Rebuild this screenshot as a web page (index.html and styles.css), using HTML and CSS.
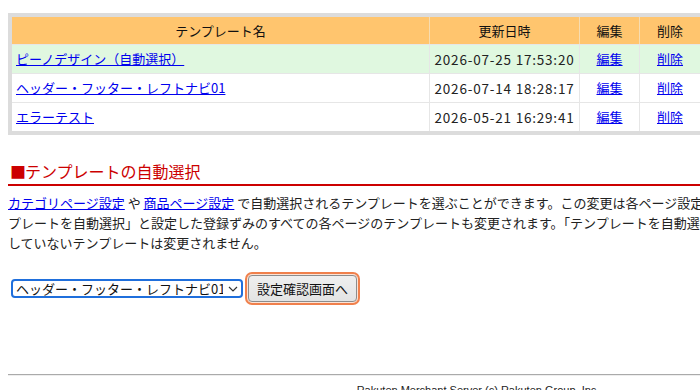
FILE: index.html
```html
<!DOCTYPE html>
<html lang="ja">
<head>
<meta charset="utf-8">
<title>テンプレート一覧</title>
<link rel="stylesheet" href="styles.css">
</head>
<body>
<div class="page">
  <div class="frame">
    <table class="tpl-table">
      <colgroup>
        <col class="c-name"><col class="c-date"><col class="c-edit"><col class="c-del">
      </colgroup>
      <thead>
        <tr><th>テンプレート名</th><th>更新日時</th><th>編集</th><th>削除</th></tr>
      </thead>
      <tbody>
        <tr class="selected">
          <td class="name"><a href="#">ピーノデザイン（自動選択）</a></td>
          <td class="date">2026-07-25 17:53:20</td>
          <td class="act"><a href="#">編集</a></td>
          <td class="act"><a href="#">削除</a></td>
        </tr>
        <tr>
          <td class="name"><a href="#">ヘッダー・フッター・レフトナビ01</a></td>
          <td class="date">2026-07-14 18:28:17</td>
          <td class="act"><a href="#">編集</a></td>
          <td class="act"><a href="#">削除</a></td>
        </tr>
        <tr>
          <td class="name"><a href="#">エラーテスト</a></td>
          <td class="date">2026-05-21 16:29:41</td>
          <td class="act"><a href="#">編集</a></td>
          <td class="act"><a href="#">削除</a></td>
        </tr>
      </tbody>
    </table>
  </div>

  <h2 class="section-title"><span class="mark">■</span>テンプレートの自動選択</h2>
  <p class="desc"><a href="#">カテゴリページ設定</a> や <a href="#">商品ページ設定</a> で自動選択されるテンプレートを選ぶことができます。この変更は各ページ設定で「テン<br>プレートを自動選択」と設定した登録ずみのすべての各ページのテンプレートも変更されます。「テンプレートを自動選択」と設定<br>していないテンプレートは変更されません。</p>

  <form class="auto-form">
    <span class="select-wrap">
      <select class="tpl-select">
        <option>ヘッダー・フッター・レフトナビ01</option>
        <option>ピーノデザイン</option>
        <option>エラーテスト</option>
      </select>
      <svg class="chev" width="10" height="6" viewBox="0 0 10 6"><path d="M1 1 L5 5 L9 1" fill="none" stroke="#333" stroke-width="1.2"/></svg>
    </span>
    <button type="button" class="btn">設定確認画面へ</button>
  </form>

  <hr class="rule">
  <div class="footer">Rakuten Merchant Server (c) Rakuten Group, Inc.</div>
</div>
</body>
</html>
```

FILE: styles.css
```css
html, body {
  margin: 0;
  padding: 0;
  background: #fff;
}
body {
  padding: 8px;
  font-family: "Noto Sans CJK JP", "Noto Sans", sans-serif;
  font-size: 13px;
  color: #222;
  overflow: hidden;
}
.page {
  width: 940px;
  padding-top: 5px;
}
a { color: #0000ee; }

.frame {
  width: 688px;
  background: #dcdcdc;
  padding: 4px;
}
.tpl-table {
  width: 688px;
  table-layout: fixed;
  border-collapse: separate;
  border-spacing: 0;
  line-height: 20px;
}
.c-name { width: 417px; }
.c-date { width: 150px; }
.c-edit { width: 60px; }
.c-del { width: 61px; }

.tpl-table th,
.tpl-table td {
  border-left: 1px solid #e6e6e6;
  border-top: 1px solid #e6e6e6;
  background: #fff;
  font-weight: normal;
}
.tpl-table th:first-child,
.tpl-table td:first-child { border-left: none; }
.tpl-table thead th { border-top: none; }
.tpl-table th {
  background: #ffc56e;
  padding: 4px 4px 3px;
  text-align: center;
  color: #111;
  border-left-color: #f7dcb0;
}
.tpl-table td {
  padding: 4px;
  height: 20px;
}
.tpl-table tr.selected td { background: #e0f8e0; }
.tpl-table td.name { text-align: left; }
.tpl-table td.date {
  text-align: center;
  color: #222;
  font-size: 13.5px;
  letter-spacing: 0.8px;
}
.tpl-table td.act { text-align: center; }

.section-title {
  margin: 26px 0 0;
  padding: 0 0 3px;
  font-size: 16px;
  line-height: 20px;
  font-weight: normal;
  color: #cc0000;
  border-bottom: 2px solid #cc0000;
}
.section-title .mark {
  color: #cc0000;
  display: inline-block;
  margin-left: 2px;
  margin-right: -1px;
}

.desc {
  margin: 7px 0 0;
  line-height: 20px;
  white-space: nowrap;
}

.auto-form {
  display: flex;
  align-items: center;
  gap: 5px;
  margin-top: 22px;
  padding-left: 3px;
}
.select-wrap {
  position: relative;
  display: inline-flex;
}
.tpl-select {
  appearance: none;
  -webkit-appearance: none;
  width: 232px;
  height: 19px;
  box-sizing: border-box;
  border: 2px solid #1f6fdc;
  border-radius: 4px;
  background: #fff;
  font-family: "Noto Sans CJK JP", sans-serif;
  font-size: 13px;
  line-height: 15px;
  color: #111;
  padding: 0 18px 0 3px;
  margin: 0;
}
.chev {
  position: absolute;
  right: 5px;
  top: 7px;
  pointer-events: none;
}
.btn {
  width: 109px;
  height: 27px;
  box-sizing: border-box;
  border: 1px solid #8c8c8c;
  border-radius: 4px;
  background: linear-gradient(#efefef, #e3e3e3);
  font-family: "Noto Sans CJK JP", sans-serif;
  font-size: 13px;
  color: #111;
  padding: 0;
  box-shadow: 0 0 0 1px #fbe3d6, 0 0 0 3px #f0804c;
}

.rule {
  margin: 72px 0 0;
  border: none;
  border-top: 1px solid #aaa;
  border-bottom: 1px solid #eee;
  height: 0;
}
.footer {
  margin-top: 8px;
  text-align: center;
  font-family: "Liberation Sans", Arial, sans-serif;
  font-size: 11px;
  line-height: 13px;
  color: #222;
}
```
